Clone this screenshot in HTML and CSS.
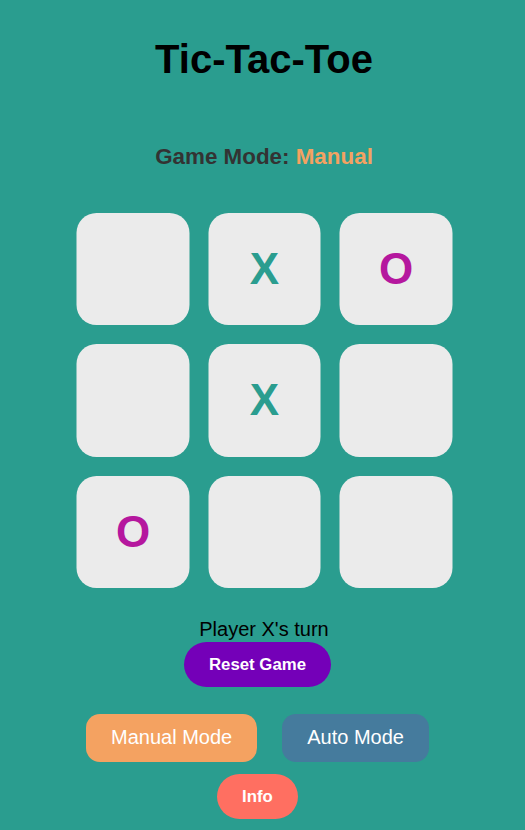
FILE: index.html
```html
<!DOCTYPE html>
<html lang="en">
<head>
<meta charset="utf-8">
<title>Tic-Tac-Toe</title>
<link rel="stylesheet" href="styles.css">
</head>
<body>
<main class="app">
  <h1 class="title">Tic-Tac-Toe</h1>
  <p class="mode">Game Mode: <span class="mode-value">Manual</span></p>
  <div class="board">
    <div class="cell"></div>
    <div class="cell x">X</div>
    <div class="cell o">O</div>
    <div class="cell"></div>
    <div class="cell x">X</div>
    <div class="cell"></div>
    <div class="cell o">O</div>
    <div class="cell"></div>
    <div class="cell"></div>
  </div>
  <p class="status">Player X's turn</p>
  <div class="row row-reset">
    <button class="btn btn-bold btn-reset">Reset Game</button>
  </div>
  <div class="row row-modes">
    <button class="btn btn-mode btn-manual">Manual Mode</button>
    <button class="btn btn-mode btn-auto">Auto Mode</button>
  </div>
  <div class="row row-info">
    <button class="btn btn-bold btn-info">Info</button>
  </div>
</main>
</body>
</html>
```

FILE: styles.css
```css
html, body {
  margin: 0;
  padding: 0;
  background: #2a9d8f;
}

body {
  font-family: "Liberation Sans", Arial, sans-serif;
  color: #000;
}

.app {
  display: flex;
  flex-direction: column;
  align-items: center;
  padding-left: 3px;
}

.title {
  margin: 35.5px 0 0;
  font-size: 40px;
  font-weight: bold;
  line-height: 1.15;
}

.mode {
  margin: 62px 0 0;
  font-size: 22.4px;
  font-weight: bold;
  line-height: 1.15;
  color: #333;
}

.mode-value {
  color: #f4a261;
}

.board {
  margin-top: 43.5px;
  display: grid;
  grid-template-columns: repeat(3, 112.5px);
  grid-auto-rows: 112.5px;
  gap: 19px;
  transform: translateX(0.5px);
}

.cell {
  background: #ebebeb;
  border-radius: 20px;
  display: flex;
  align-items: center;
  justify-content: center;
  font-size: 44px;
  font-weight: bold;
  line-height: 1.15;
}

.cell.x { color: #2a9d8f; }
.cell.o { color: #b5179e; }

.status {
  margin: 29.7px 0 0;
  font-size: 20px;
  line-height: 1.15;
}

.row {
  display: flex;
  justify-content: center;
  align-self: stretch;
  padding-right: 13px;
}

.row-reset { margin-top: 1.4px; }
.row-modes { margin-top: 27.3px; gap: 25px; }
.row-info { margin-top: 12.3px; }

.btn {
  border: none;
  margin: 0;
  color: #fff;
  font-family: "Liberation Sans", Arial, sans-serif;
  line-height: 1.15;
  cursor: pointer;
}

.btn-bold {
  font-size: 16.8px;
  font-weight: bold;
  padding: 12.5px 24.5px;
  border-radius: 23px;
}

.btn-reset { background: #7400b8; }
.btn-info { background: #ff6f61; padding: 13px 25px; }

.btn-mode {
  font-size: 20px;
  padding: 12.35px 25px;
  border-radius: 14px;
}

.btn-manual { background: #f4a261; }
.btn-auto { background: #457b9d; }
```
